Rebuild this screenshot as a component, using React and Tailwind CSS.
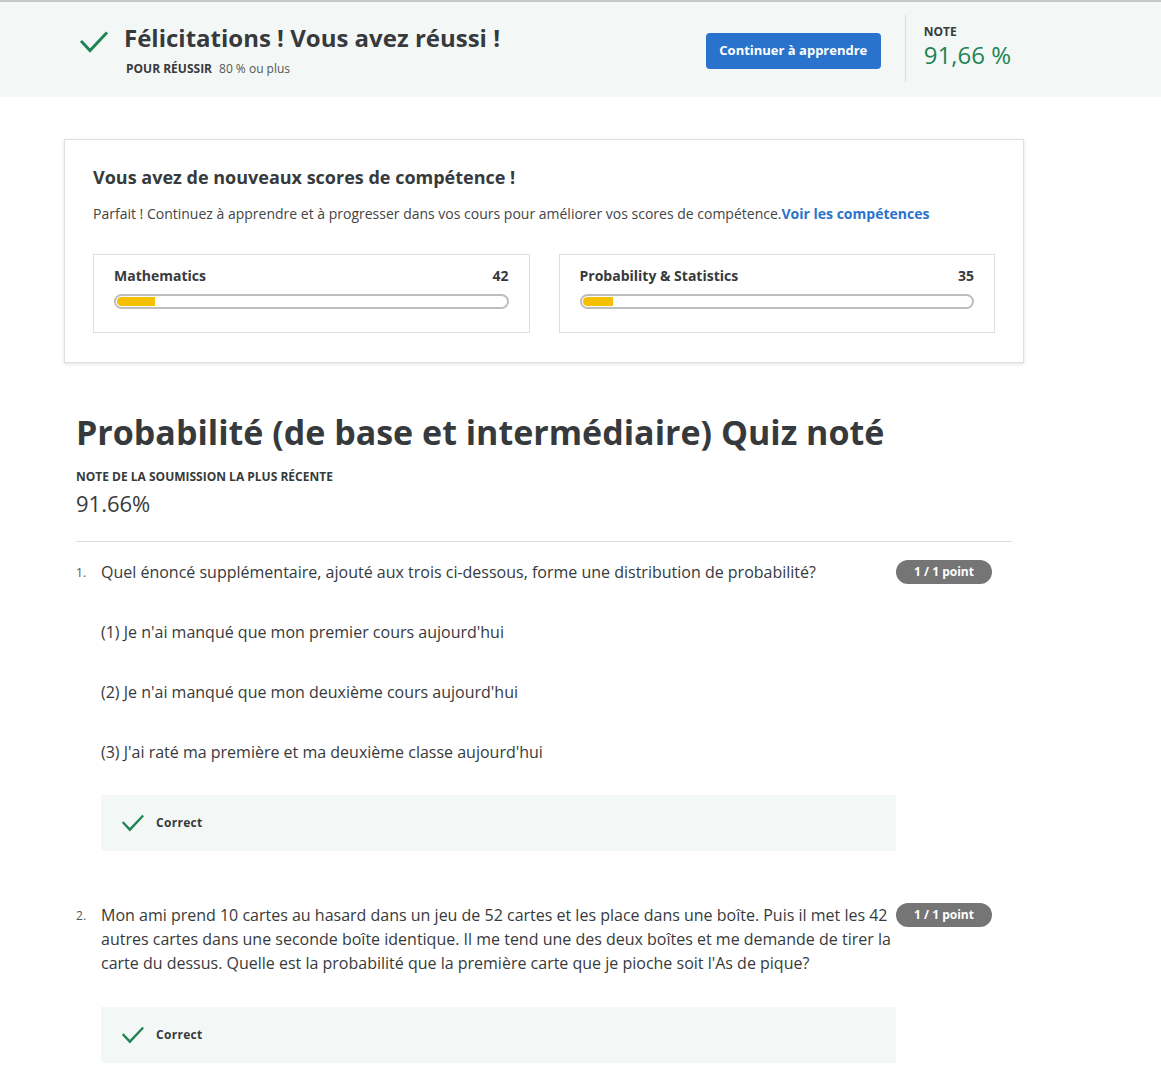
import React from 'react';

const Check = ({ className }) => (
  <svg viewBox="0 0 28 22" className={className} fill="none">
    <polyline points="2,11 10,19.5 26,2.5" stroke="#1f8354" strokeWidth="3" strokeLinecap="square" />
  </svg>
);

const SkillCard = ({ name, score, fill }) => (
  <div className="flex-1 border border-[#dedede] px-5 pt-[11px] pb-[23px]">
    <div className="flex justify-between text-sm font-bold leading-5 text-[#373a3c]">
      <span>{name}</span>
      <span>{score}</span>
    </div>
    <div className="mt-2 h-[15px] rounded-full border-2 border-[#bdbdbd] p-px overflow-hidden">
      <div className="h-full rounded-l-full bg-[#f5c000]" style={{ width: fill }} />
    </div>
  </div>
);

const Correct = ({ className }) => (
  <div className={`flex h-14 items-center bg-[#f3f8f6] pl-[21px] ${className}`}>
    <Check className="w-[22px] h-[18px]" />
    <span className="ml-3 text-[12px] font-bold tracking-wide text-[#373a3c]">Correct</span>
  </div>
);

const Badge = () => (
  <span className="flex h-6 w-24 shrink-0 items-center justify-center rounded-full bg-[#757575] text-[12px] font-bold text-white">
    1 / 1 point
  </span>
);

const Question = ({ n, children }) => (
  <div className="flex">
    <span className="w-[25px] shrink-0 pt-[3px] text-[12px] leading-5 text-[#555]">{n}.</span>
    <div className="w-[795px] shrink-0 text-base leading-6 text-[#373a3c]">{children}</div>
    <Badge />
  </div>
);

export default function App() {
  return (
    <div className="min-h-screen bg-white text-[#373a3c]" style={{ fontFamily: '"Open Sans", "Liberation Sans", sans-serif' }}>
      <header className="h-[97px] border-t-2 border-[#c8c8c8] bg-[#f3f8f6]">
        <div className="flex pl-[80px]">
          <div className="flex pt-[20px]">
            <Check className="mt-[9px] w-[28px] h-[22px]" />
            <div className="ml-4">
              <h1 className="text-[24px] font-bold leading-8 text-[#373a3c]">Félicitations ! Vous avez réussi !</h1>
              <p className="mt-[7px] ml-[2px] text-[12px] leading-4">
                <span className="font-bold">POUR RÉUSSIR</span>
                <span className="ml-[7px] text-[#555]">80 % ou plus</span>
              </p>
            </div>
          </div>
          <button className="ml-auto mt-[31px] h-9 w-[175px] rounded-sm bg-[#2a73cc] text-[13px] font-bold text-white">
            Continuer à apprendre
          </button>
          <div className="ml-6 mr-[150px] mt-[13px] flex h-[67px] border-l border-[#dcdcdc] pl-[18px]">
            <div className="pt-[9px]">
              <div className="text-[12px] font-bold leading-4">NOTE</div>
              <div className="mt-[2px] text-[24px] leading-[26px] text-[#1f8354]">91,66 %</div>
            </div>
          </div>
        </div>
      </header>

      <main className="ml-[64px] w-[960px] pt-[42px] pb-4">
        <section className="border border-[#e0e0e0] bg-white px-7 pt-[23px] pb-[29px] shadow-[0_1px_4px_rgba(0,0,0,0.12)]">
          <h2 className="text-[18px] font-bold leading-7">Vous avez de nouveaux scores de compétence !</h2>
          <p className="mt-[13px] text-[14px] leading-5 text-[#444]">
            Parfait ! Continuez à apprendre et à progresser dans vos cours pour améliorer vos scores de compétence.
            <a className="font-bold text-[#2a73cc]">Voir les compétences</a>
          </p>
          <div className="mt-[30px] flex gap-[29px]">
            <SkillCard name="Mathematics" score="42" fill="38px" />
            <SkillCard name="Probability & Statistics" score="35" fill="30px" />
          </div>
        </section>

        <div className="ml-3 w-[936px]">
          <h1 className="mt-[47px] text-[34px] font-bold leading-[44px]">Probabilité (de base et intermédiaire) Quiz noté</h1>
          <div className="mt-[15px] text-[12px] font-bold leading-4">NOTE DE LA SOUMISSION LA PLUS RÉCENTE</div>
          <div className="mt-[4px] text-[22px] leading-7">91.66%</div>
          <div className="mt-[24px] border-t border-[#dcdcdc]" />

          <div className="pt-[18px]">
            <Question n={1}>
              <p>Quel énoncé supplémentaire, ajouté aux trois ci-dessous, forme une distribution de probabilité?</p>
              <p className="mt-9">(1) Je n'ai manqué que mon premier cours aujourd'hui</p>
              <p className="mt-9">(2) Je n'ai manqué que mon deuxième cours aujourd'hui</p>
              <p className="mt-9">(3) J'ai raté ma première et ma deuxième classe aujourd'hui</p>
              <Correct className="mt-[31px]" />
            </Question>
          </div>

          <div className="mt-[52px]">
            <Question n={2}>
              <p>
                Mon ami prend 10 cartes au hasard dans un jeu de 52 cartes et les place dans une boîte. Puis il met les 42 autres cartes dans une seconde boîte identique. Il me tend une des deux boîtes et me demande de tirer la carte du dessus. Quelle est la probabilité que la première carte que je pioche soit l'As de pique?
              </p>
              <Correct className="mt-8" />
            </Question>
          </div>
        </div>
      </main>
    </div>
  );
}
